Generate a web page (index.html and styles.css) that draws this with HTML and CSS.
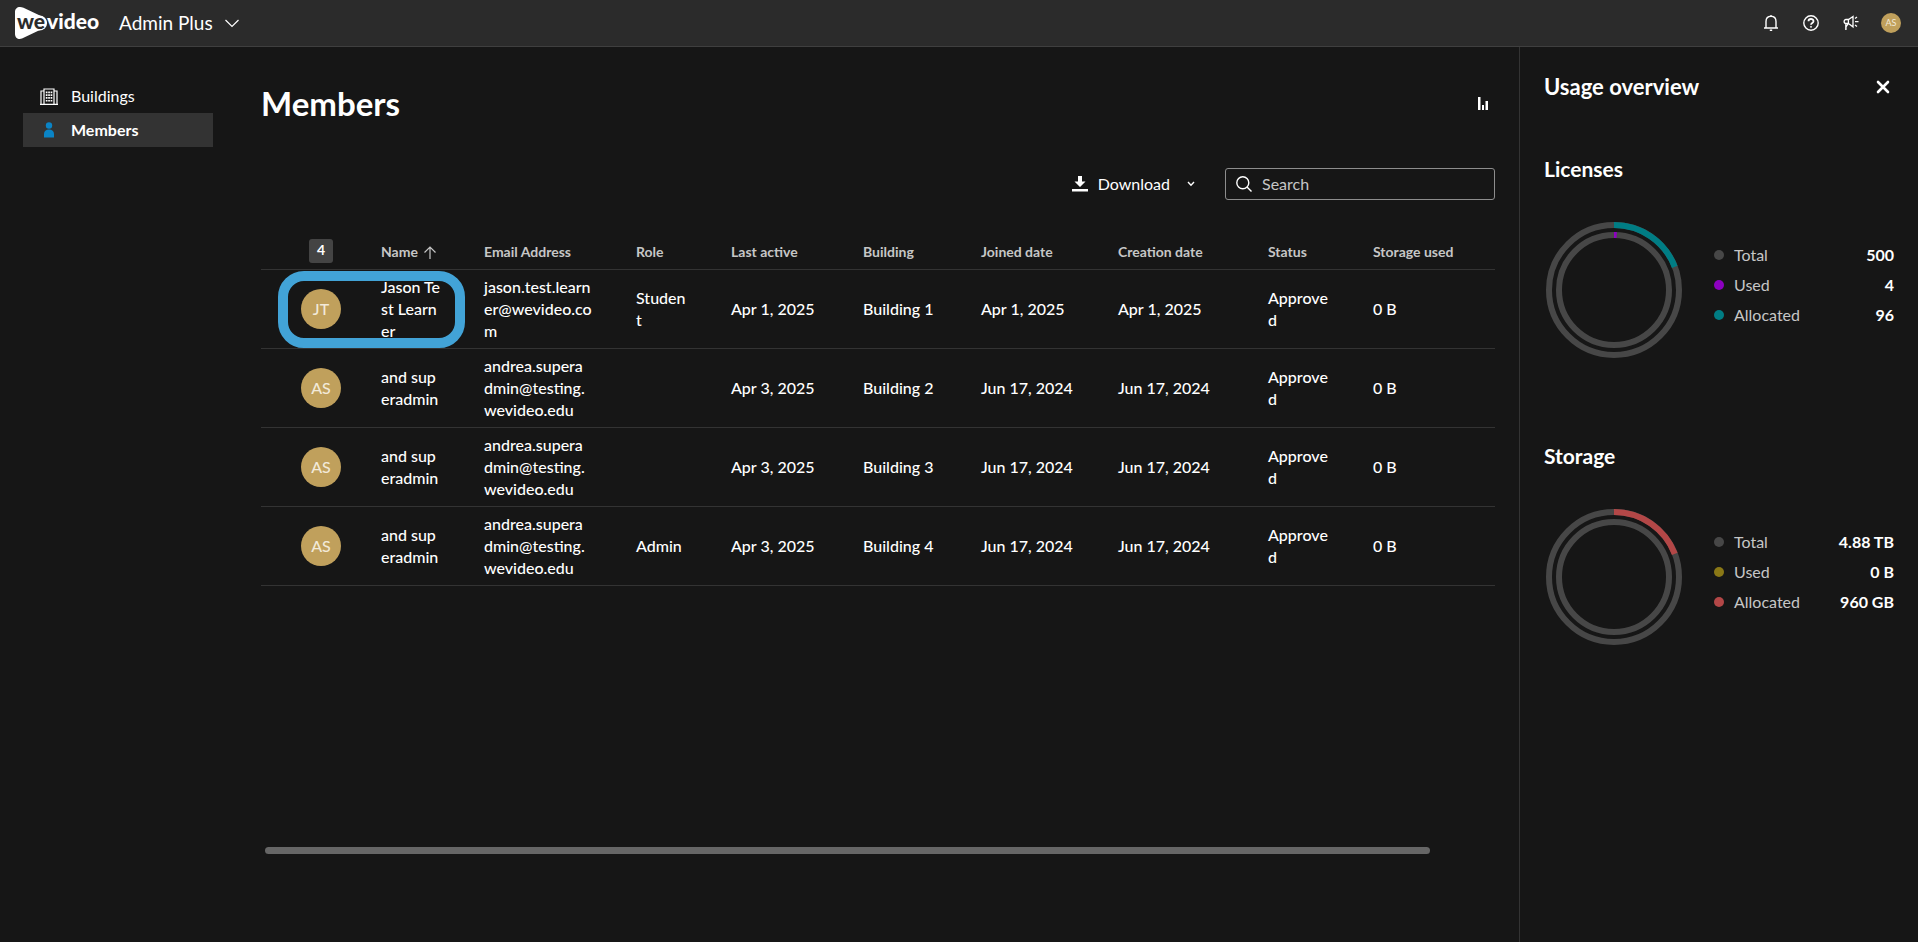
FILE: index.html
```html
<!DOCTYPE html>
<html lang="en">
<head>
  <meta charset="utf-8">
  <title>Members - Admin Plus</title>
  <link rel="stylesheet" href="styles.css">
</head>
<body>
  <header class="topbar">
    <a href="#" class="logo" aria-label="WeVideo">
      <svg width="86" height="34" viewBox="0 0 86 34">
        <path d="M6 1 C3 1 1 3 1 6 V28 C1 32 4.500 34 8 32.500 L28 23 C34 19.500 34 13.500 28 10.500 L9.500 1.800 C8.300 1.200 7.200 1 6 1 Z" fill="#fff"/>
        <circle cx="25.500" cy="17" r="7.600" fill="#fff"/>
        <text x="3" y="23" class="logo-we">we</text>
        <text x="33" y="23" class="logo-video">video</text>
      </svg>
    </a>
    <button class="product-menu">
      Admin Plus
      <svg width="14" height="9" viewBox="0 0 14 9"><path d="M.5 1 L7 7.500 L13.500 1" fill="none" stroke="#fff" stroke-width="1.200"/></svg>
    </button>
    <div class="topbar-actions">
      <button aria-label="Notifications">
        <svg width="16" height="18" viewBox="0 0 16 18" fill="none" stroke="#fff" stroke-width="1.400"><path d="M1 14 H15 M3 14 V7.500 C3 4 5 2.200 8 2.200 S13 4 13 7.500 V14 M8 1 V2.200 M6.800 16.300 H9.200"/></svg>
      </button>
      <button aria-label="Help">
        <svg width="16" height="16" viewBox="0 0 16 16" fill="none" stroke="#fff" stroke-width="1.400"><circle cx="8" cy="8" r="7.200"/><path d="M5.500 6.300 C5.500 3.200 10.500 3.300 10.500 6.200 C10.500 8 8 8 8 9.800" stroke-width="1.800"/><circle cx="8" cy="11.800" r=".6" fill="#fff" stroke-width=".8"/></svg>
      </button>
      <button aria-label="News">
        <svg width="16" height="16" viewBox="0 0 16 16" fill="none" stroke="#fff" stroke-width="1.300"><path d="M10 1.500 L5.500 4.500 H3 C.5 4.500 .5 8.500 3 8.500 H5.500 L10 12 Z M2.800 8.500 V15 M5.400 4.500 V8.500 M3 14.800 V12 L5 9 M12 6.700 H15.500 M12 3.500 L14 2 M12 10 L14 11.500"/></svg>
      </button>
      <button class="avatar avatar-small" aria-label="Account">AS</button>
    </div>
  </header>

  <div class="layout">
    <nav class="sidebar">
      <a href="#" class="nav-item">
        <svg width="18" height="17" viewBox="0 0 18 17"><path d="M4 16 V1 H14 V16 M4 3 H1 V16 M14 3 H17 V16 M0 16.400 H18" fill="none" stroke="#fff" stroke-width="1.200"/><path d="M5.800 3.500 h1.700 v1.700 h-1.700 Z m2.400 0 h1.700 v1.700 h-1.700 Z m2.400 0 h1.700 v1.700 h-1.700 Z M5.800 6.300 h1.700 v1.700 h-1.700 Z m2.400 0 h1.700 v1.700 h-1.700 Z m2.400 0 h1.700 v1.700 h-1.700 Z M5.800 9.100 h1.700 v1.700 h-1.700 Z m2.400 0 h1.700 v1.700 h-1.700 Z m2.400 0 h1.700 v1.700 h-1.700 Z M5.800 11.900 h1.700 v1.700 h-1.700 Z m2.400 0 h1.700 v1.700 h-1.700 Z m2.400 0 h1.700 v1.700 h-1.700 Z" fill="#fff"/></svg>
        Buildings
      </a>
      <a href="#" class="nav-item active">
        <svg width="18" height="16" viewBox="0 0 18 16" fill="#0a84c6"><circle cx="9" cy="3.500" r="3.200"/><path d="M4 15.500 V12 C4 9 6 7.500 9 7.500 S14 9 14 12 V15.500 Z"/></svg>
        Members
      </a>
    </nav>

    <main class="content">
      <div class="title-row">
        <h1>Members</h1>
        <button aria-label="Usage overview">
          <svg width="12" height="14" viewBox="0 0 12 14" fill="#fff"><path d="M1 1 H3.500 V14 H1 Z M5 9 H7 V14 H5 Z M8.500 5 H11 V14 H8.500 Z"/></svg>
        </button>
      </div>

      <div class="toolbar">
        <button class="download">
          <svg width="16" height="16" viewBox="0 0 16 16" fill="#fff"><path d="M6 0 H10 V5.500 H13.500 L8 11 L2.500 5.500 H6 Z M0 13 H16 V15.500 H0 Z"/></svg>
          Download
          <svg class="caret" width="8" height="6" viewBox="0 0 8 6"><path d="M1 1 L4 4.200 L7 1" fill="none" stroke="#fff" stroke-width="1.400"/></svg>
        </button>
        <div class="search">
          <svg width="16" height="16" viewBox="0 0 16 16" fill="none" stroke="#fff" stroke-width="1.400"><circle cx="6.800" cy="6.800" r="6"/><path d="M11 11 L15.500 15.500"/></svg>
          <input type="text" placeholder="Search" aria-label="Search">
        </div>
      </div>

      <table class="members">
        <colgroup>
          <col class="col-avatar"><col class="col-name"><col class="col-email"><col class="col-role"><col class="col-active">
          <col class="col-building"><col class="col-joined"><col class="col-created"><col class="col-status"><col class="col-storage">
        </colgroup>
        <thead>
          <tr>
            <th><span class="count">4</span></th>
            <th>Name <svg width="12" height="13" viewBox="0 0 12 13"><path d="M6 13 V1 M.5 6.500 L6 1 L11.500 6.500" fill="none" stroke="#c6c6c6" stroke-width="1.200"/></svg></th>
            <th>Email Address</th>
            <th>Role</th>
            <th>Last active</th>
            <th>Building</th>
            <th>Joined date</th>
            <th>Creation date</th>
            <th>Status</th>
            <th>Storage used</th>
          </tr>
        </thead>
        <tbody>
          <tr>
            <td class="highlighted"><span class="avatar">JT</span></td>
            <td>Jason Test Learner</td>
            <td>jason.test.learn<br>er@wevideo.co<br>m</td>
            <td>Student</td>
            <td>Apr 1, 2025</td>
            <td>Building 1</td>
            <td>Apr 1, 2025</td>
            <td>Apr 1, 2025</td>
            <td>Approved</td>
            <td>0 B</td>
          </tr>
          <tr>
            <td><span class="avatar">AS</span></td>
            <td>and superadmin</td>
            <td>andrea.supera<br>dmin@testing.<br>wevideo.edu</td>
            <td></td>
            <td>Apr 3, 2025</td>
            <td>Building 2</td>
            <td>Jun 17, 2024</td>
            <td>Jun 17, 2024</td>
            <td>Approved</td>
            <td>0 B</td>
          </tr>
          <tr>
            <td><span class="avatar">AS</span></td>
            <td>and superadmin</td>
            <td>andrea.supera<br>dmin@testing.<br>wevideo.edu</td>
            <td></td>
            <td>Apr 3, 2025</td>
            <td>Building 3</td>
            <td>Jun 17, 2024</td>
            <td>Jun 17, 2024</td>
            <td>Approved</td>
            <td>0 B</td>
          </tr>
          <tr>
            <td><span class="avatar">AS</span></td>
            <td>and superadmin</td>
            <td>andrea.supera<br>dmin@testing.<br>wevideo.edu</td>
            <td>Admin</td>
            <td>Apr 3, 2025</td>
            <td>Building 4</td>
            <td>Jun 17, 2024</td>
            <td>Jun 17, 2024</td>
            <td>Approved</td>
            <td>0 B</td>
          </tr>
        </tbody>
      </table>

      <div class="scroll-track"><div class="scroll-thumb"></div></div>
    </main>

    <aside class="usage">
      <div class="usage-header">
        <h2>Usage overview</h2>
        <button aria-label="Close">
          <svg width="14" height="14" viewBox="0 0 14 14"><path d="M2 2 L12 12 M12 2 L2 12" stroke="#fff" stroke-width="2.600" stroke-linecap="round"/></svg>
        </button>
      </div>

      <section class="usage-section">
        <h3>Licenses</h3>
        <div class="usage-body">
          <svg class="chart" width="140" height="140" viewBox="0 0 140 140">
            <circle class="ring" cx="70" cy="70" r="65"/>
            <circle class="ring" cx="70" cy="70" r="55"/>
            <circle class="ring teal" cx="70" cy="70" r="65" pathLength="500" stroke-dasharray="96 404" transform="rotate(-90 70 70)"/>
            <circle class="ring purple" cx="70" cy="70" r="55" pathLength="500" stroke-dasharray="4 496" transform="rotate(-90 70 70)"/>
          </svg>
          <dl class="legend">
            <div><dt class="dot-gray">Total</dt><dd>500</dd></div>
            <div><dt class="dot-purple">Used</dt><dd>4</dd></div>
            <div><dt class="dot-teal">Allocated</dt><dd>96</dd></div>
          </dl>
        </div>
      </section>

      <section class="usage-section">
        <h3>Storage</h3>
        <div class="usage-body">
          <svg class="chart" width="140" height="140" viewBox="0 0 140 140">
            <circle class="ring" cx="70" cy="70" r="65"/>
            <circle class="ring" cx="70" cy="70" r="55"/>
            <circle class="ring red" cx="70" cy="70" r="65" pathLength="500" stroke-dasharray="96 404" transform="rotate(-90 70 70)"/>
          </svg>
          <dl class="legend">
            <div><dt class="dot-gray">Total</dt><dd>4.88 TB</dd></div>
            <div><dt class="dot-olive">Used</dt><dd>0 B</dd></div>
            <div><dt class="dot-red">Allocated</dt><dd>960 GB</dd></div>
          </dl>
        </div>
      </section>
    </aside>
  </div>
</body>
</html>
```
FILE: styles.css
```css
*,
*::before,
*::after {
  box-sizing: border-box;
}

body {
  margin: 0;
  min-height: 100vh;
  display: flex;
  flex-direction: column;
  background: #161616;
  color: #fff;
  font-family: Lato, sans-serif;
  font-size: 16px;
  line-height: 22px;
}

h1, h2, h3, dl, dd {
  margin: 0;
}

a {
  color: inherit;
  text-decoration: none;
}

button {
  display: flex;
  align-items: center;
  padding: 0;
  border: 0;
  background: none;
  color: inherit;
  font: inherit;
  cursor: pointer;
}

svg {
  flex-shrink: 0;
}

/* top bar */
.topbar {
  display: flex;
  align-items: center;
  height: 47px;
  padding: 0 17px 0 14px;
  background: #2b2b2b;
  border-bottom: 1px solid #3f3f3f;
}

.logo svg {
  display: block;
}

.logo-we,
.logo-video {
  font-family: Lato, sans-serif;
  font-size: 21px;
  font-weight: 900;
  fill: #fff;
}

.logo-we {
  fill: #2b2b2b;
}

.product-menu {
  gap: 12px;
  margin-left: 19px;
  font-size: 19px;
}

.topbar-actions {
  display: flex;
  align-items: center;
  gap: 20px;
  margin-left: auto;
}

.topbar-actions button {
  width: 20px;
  justify-content: center;
}

.avatar {
  display: flex;
  align-items: center;
  justify-content: center;
  width: 40px;
  height: 40px;
  border-radius: 50%;
  background: #c0a05c;
  color: #f2e9d8;
}

.avatar-small {
  height: 20px;
  font-size: 9px;
}

/* page */
.layout {
  flex: 1;
  display: flex;
}

.sidebar {
  width: 261px;
  flex-shrink: 0;
  padding: 32px 48px 0 23px;
}

.nav-item {
  display: flex;
  align-items: center;
  gap: 13px;
  height: 34px;
  padding-left: 17px;
}

.nav-item.active {
  background: #333;
  font-weight: bold;
}

.content {
  flex: 1;
  min-width: 0;
  display: flex;
  flex-direction: column;
  padding: 36px 24px 88px 0;
}

.title-row {
  display: flex;
  align-items: center;
  justify-content: space-between;
  padding-right: 6px;
}

h1 {
  font-size: 33px;
  line-height: 40px;
}

.toolbar {
  display: flex;
  justify-content: flex-end;
  gap: 30px;
  margin-top: 45px;
}

.download {
  gap: 10px;
}

.caret {
  margin-left: 7px;
}

.search {
  display: flex;
  align-items: center;
  gap: 10px;
  width: 270px;
  height: 32px;
  padding: 0 10px;
  border: 1px solid #8d8d8d;
  border-radius: 3px;
}

.search input {
  flex: 1;
  min-width: 0;
  padding: 0;
  border: 0;
  outline: none;
  background: none;
  color: #fff;
  font: inherit;
}

.search input::placeholder {
  color: #c6c6c6;
}

/* members table */
.members {
  width: 100%;
  margin-top: 35px;
  border-collapse: separate;
  border-spacing: 0;
  table-layout: fixed;
}

.col-avatar { width: 100px; }
.col-name { width: 103px; }
.col-email { width: 152px; }
.col-role { width: 95px; }
.col-active { width: 132px; }
.col-building { width: 118px; }
.col-joined { width: 137px; }
.col-created { width: 150px; }
.col-status { width: 105px; }
.col-storage { width: 142px; }

.members th {
  height: 35px;
  padding: 0 20px;
  border-bottom: 1px solid #333;
  color: #c6c6c6;
  font-size: 14px;
  text-align: left;
  white-space: nowrap;
}

.members th svg {
  margin-left: 3px;
  vertical-align: -2px;
}

.members td {
  height: 79px;
  padding: 0 20px;
  border-bottom: 1px solid #333;
  font-weight: 500;
  word-break: break-all;
}

.members td:first-child {
  padding: 0 20px 0 40px;
}

.members th:first-child {
  padding: 0 0 2px 48px;
}

.count {
  display: block;
  width: 24px;
  height: 24px;
  border-radius: 3px;
  background: #444;
  color: #fff;
  line-height: 22px;
  text-align: center;
}

.highlighted {
  position: relative;
}

/* frame over the avatar and name of the picked member */
.highlighted::after {
  content: "";
  position: absolute;
  top: 1px;
  left: 17px;
  width: 187px;
  height: 77px;
  border: 10px solid #42a3d7;
  border-radius: 26px;
}

.scroll-track {
  margin-top: auto;
  padding: 0 4px;
}

.scroll-thumb {
  width: 95%;
  height: 7px;
  border-radius: 4px;
  background: #666;
}

/* usage panel */
.usage {
  width: 399px;
  flex-shrink: 0;
  padding: 26px 24px 0;
  border-left: 1px solid #333;
}

h2 {
  font-size: 22px;
  line-height: 28px;
}

h3 {
  font-size: 21px;
  line-height: 28px;
}

.usage-header {
  display: flex;
  align-items: center;
  justify-content: space-between;
  margin-bottom: 54px;
  padding-right: 4px;
}

.usage-section {
  margin-bottom: 82px;
}

.usage-body {
  display: flex;
  align-items: center;
  gap: 30px;
  margin-top: 37px;
}

.ring {
  fill: none;
  stroke: #474747;
  stroke-width: 6;
}

.ring.teal { stroke: #007d84; }
.ring.purple { stroke: #8d00c0; }
.ring.red { stroke: #b34747; }

.legend {
  flex: 1;
  margin-bottom: 10px;
}

.legend div {
  display: flex;
  justify-content: space-between;
  line-height: 30px;
}

.legend dt {
  display: flex;
  align-items: center;
  color: #c6c6c6;
}

.legend dt::before {
  content: "";
  width: 10px;
  height: 10px;
  margin-right: 10px;
  border-radius: 50%;
  background: #474747;
}

.legend .dot-purple::before { background: #8d00c0; }
.legend .dot-teal::before { background: #007d84; }
.legend .dot-olive::before { background: #8a7816; }
.legend .dot-red::before { background: #b34747; }

.legend dd {
  font-weight: bold;
}
```
